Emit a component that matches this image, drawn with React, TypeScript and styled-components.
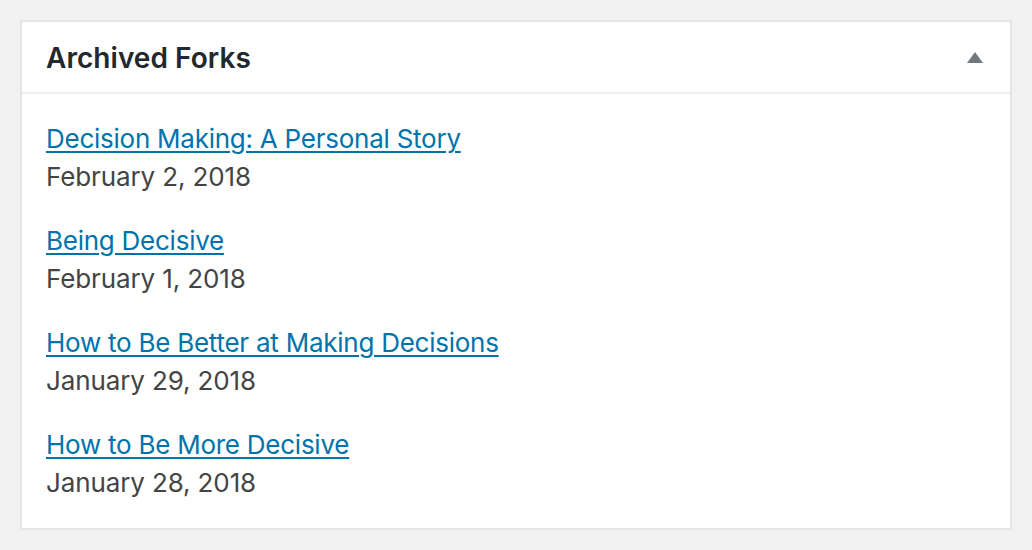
import React from "react";
import styled, { createGlobalStyle } from "styled-components";

const Global = createGlobalStyle`
  html, body { margin: 0; padding: 0; background: #f1f1f1; }
  body { font-family: Inter, "Noto Sans", "Liberation Sans", sans-serif; }
`;

const Page = styled.div`
  width: 1032px;
  height: 550px;
  box-sizing: border-box;
  padding: 20px 20px 0 20px;
  background: #f1f1f1;
`;

const Postbox = styled.section`
  width: 992px;
  box-sizing: border-box;
  background: #fff;
  border: 2px solid #e5e5e5;
`;

const Header = styled.header`
  display: flex;
  align-items: center;
  justify-content: space-between;
  height: 70px;
  padding: 2px 27px 0 24px;
  box-sizing: border-box;
  border-bottom: 2px solid #eeeeee;
  height: 72px;
`;

const Title = styled.h2`
  margin: 0;
  font-size: 28px;
  font-weight: 600;
  color: #23282d;
  line-height: 68px;
  letter-spacing: 0.05px;
`;

const Toggle = styled.button`
  display: flex;
  padding: 0;
  border: 0;
  background: none;
  cursor: pointer;
`;

const Inside = styled.div`
  display: flex;
  flex-direction: column;
  gap: 26px;
  padding: 26px 24px 26px 24px;
`;

const Item = styled.div`
  display: flex;
  flex-direction: column;
  align-items: flex-start;
`;

const Link = styled.a`
  font-size: 26px;
  line-height: 38px;
  letter-spacing: -0.25px;
  color: #0073aa;
  text-decoration: underline;
  text-decoration-thickness: 2px;
  text-underline-offset: 3px;
`;

const DateText = styled.span`
  font-size: 26px;
  line-height: 38px;
  letter-spacing: -0.12px;
  color: #444;
`;

const items = [
  { title: "Decision Making: A Personal Story", date: "February 2, 2018" },
  { title: "Being Decisive", date: "February 1, 2018" },
  { title: "How to Be Better at Making Decisions", date: "January 29, 2018" },
  { title: "How to Be More Decisive", date: "January 28, 2018" },
];

export default function App() {
  return (
    <Page>
      <Global />
      <Postbox>
        <Header>
          <Title>Archived Forks</Title>
          <Toggle aria-label="Toggle panel">
            <svg width="16" height="12" viewBox="0 0 16 12">
              <polygon points="8,0 16,11 0,11" fill="#72777c" />
            </svg>
          </Toggle>
        </Header>
        <Inside>
          {items.map((it) => (
            <Item key={it.title}>
              <Link href="#">{it.title}</Link>
              <DateText>{it.date}</DateText>
            </Item>
          ))}
        </Inside>
      </Postbox>
    </Page>
  );
}
